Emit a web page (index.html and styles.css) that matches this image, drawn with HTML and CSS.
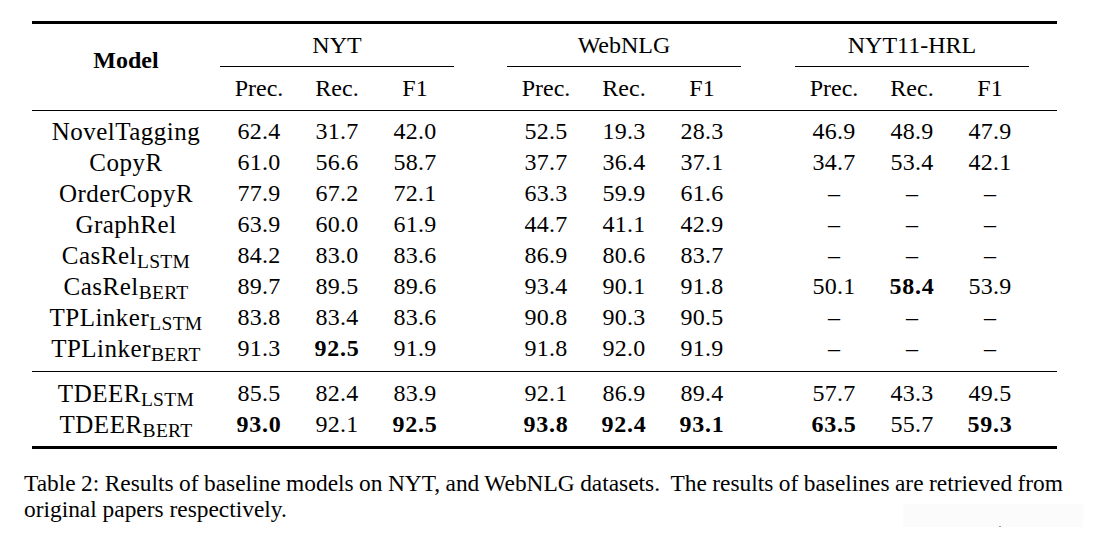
FILE: index.html
```html
<!DOCTYPE html>
<html>
<head>
<meta charset="utf-8">
<link rel="stylesheet" href="styles.css">
</head>
<body>
<div class="page">
  <div class="table">
    <div class="rule-thick"></div>
    <div class="head">
      <div class="model-h">Model</div>
      <div class="gtitle c2">NYT</div>
      <div class="gtitle c4">WebNLG</div>
      <div class="gtitle c6">NYT11-HRL</div>
      <div class="sub-h c2"><span>Prec.</span><span>Rec.</span><span>F1</span></div>
      <div class="sub-h c4"><span>Prec.</span><span>Rec.</span><span>F1</span></div>
      <div class="sub-h c6"><span>Prec.</span><span>Rec.</span><span>F1</span></div>
    </div>
    <div class="rule-thin"></div>
    <div class="body first">
      <div class="row"><div class="name">NovelTagging</div><div class="grp"><span>62.4</span><span>31.7</span><span>42.0</span></div><div class="grp g2"><span>52.5</span><span>19.3</span><span>28.3</span></div><div class="grp g3"><span>46.9</span><span>48.9</span><span>47.9</span></div></div>
      <div class="row"><div class="name">CopyR</div><div class="grp"><span>61.0</span><span>56.6</span><span>58.7</span></div><div class="grp g2"><span>37.7</span><span>36.4</span><span>37.1</span></div><div class="grp g3"><span>34.7</span><span>53.4</span><span>42.1</span></div></div>
      <div class="row"><div class="name">OrderCopyR</div><div class="grp"><span>77.9</span><span>67.2</span><span>72.1</span></div><div class="grp g2"><span>63.3</span><span>59.9</span><span>61.6</span></div><div class="grp g3"><span>–</span><span>–</span><span>–</span></div></div>
      <div class="row"><div class="name">GraphRel</div><div class="grp"><span>63.9</span><span>60.0</span><span>61.9</span></div><div class="grp g2"><span>44.7</span><span>41.1</span><span>42.9</span></div><div class="grp g3"><span>–</span><span>–</span><span>–</span></div></div>
      <div class="row"><div class="name">CasRel<span class="sub">LSTM</span></div><div class="grp"><span>84.2</span><span>83.0</span><span>83.6</span></div><div class="grp g2"><span>86.9</span><span>80.6</span><span>83.7</span></div><div class="grp g3"><span>–</span><span>–</span><span>–</span></div></div>
      <div class="row"><div class="name">CasRel<span class="sub">BERT</span></div><div class="grp"><span>89.7</span><span>89.5</span><span>89.6</span></div><div class="grp g2"><span>93.4</span><span>90.1</span><span>91.8</span></div><div class="grp g3"><span>50.1</span><span class="b">58.4</span><span>53.9</span></div></div>
      <div class="row"><div class="name">TPLinker<span class="sub">LSTM</span></div><div class="grp"><span>83.8</span><span>83.4</span><span>83.6</span></div><div class="grp g2"><span>90.8</span><span>90.3</span><span>90.5</span></div><div class="grp g3"><span>–</span><span>–</span><span>–</span></div></div>
      <div class="row"><div class="name">TPLinker<span class="sub">BERT</span></div><div class="grp"><span>91.3</span><span class="b">92.5</span><span>91.9</span></div><div class="grp g2"><span>91.8</span><span>92.0</span><span>91.9</span></div><div class="grp g3"><span>–</span><span>–</span><span>–</span></div></div>
    </div>
    <div class="rule-thin"></div>
    <div class="body second">
      <div class="row"><div class="name">TDEER<span class="sub">LSTM</span></div><div class="grp"><span>85.5</span><span>82.4</span><span>83.9</span></div><div class="grp g2"><span>92.1</span><span>86.9</span><span>89.4</span></div><div class="grp g3"><span>57.7</span><span>43.3</span><span>49.5</span></div></div>
      <div class="row"><div class="name">TDEER<span class="sub">BERT</span></div><div class="grp"><span class="b">93.0</span><span>92.1</span><span class="b">92.5</span></div><div class="grp g2"><span class="b">93.8</span><span class="b">92.4</span><span class="b">93.1</span></div><div class="grp g3"><span class="b">63.5</span><span>55.7</span><span class="b">59.3</span></div></div>
    </div>
    <div class="rule-thick"></div>
  </div>
  <div class="caption">
    <div class="cap-line1">Table 2: Results of baseline models on NYT, and WebNLG datasets.&nbsp; The results of baselines are retrieved from</div>
    <div class="cap-line2">original papers respectively.</div>
  </div>
  <div class="artifact"><span class="dot"></span></div>
</div>
</body>
</html>
```

FILE: styles.css
```css
html, body {
  margin: 0;
  padding: 0;
  background: #ffffff;
}
body {
  font-family: "Liberation Serif", "Times New Roman", serif;
  color: #000;
}
.page {
  position: relative;
  width: 1093px;
  height: 538px;
  padding-top: 21px;
  box-sizing: border-box;
}
.table {
  margin-left: 32px;
  width: 1025px;
}
.rule-thick {
  height: 3px;
  background: #000;
}
.rule-thin {
  height: 1px;
  background: #000;
}
.head {
  display: grid;
  grid-template-columns: 188px 234px 53px 234px 54px 234px 28px;
  grid-template-rows: 43px 43px;
  font-size: 24px;
}
.model-h {
  grid-column: 1;
  grid-row: 1 / 3;
  font-weight: bold;
  text-align: center;
  line-height: 24px;
  padding-top: 24px;
}
.gtitle {
  grid-row: 1;
  border-bottom: 1px solid #000;
  text-align: center;
  line-height: 42px;
}
.c2 { grid-column: 2; }
.c4 { grid-column: 4; }
.c6 { grid-column: 6; }
.sub-h {
  grid-row: 2;
  display: grid;
  grid-template-columns: repeat(3, 1fr);
  text-align: center;
  line-height: 43px;
}
.body.first {
  padding: 5px 0 7px;
}
.body.second {
  padding: 6px 0 6px;
}
.row {
  display: flex;
  height: 31px;
  font-size: 24px;
  line-height: 31px;
}
.name {
  width: 188px;
  text-align: center;
  white-space: nowrap;
  font-size: 25px;
  letter-spacing: 0.5px;
}
.sub {
  font-size: 19.5px;
  letter-spacing: 0.3px;
  line-height: 0;
  vertical-align: -4px;
}
.grp {
  width: 234px;
  display: grid;
  grid-template-columns: repeat(3, 1fr);
  text-align: center;
  letter-spacing: 0.2px;
}
.g2 { margin-left: 53px; }
.g3 { margin-left: 54px; }
.b {
  font-weight: bold;
  letter-spacing: 0.8px;
}
.caption {
  margin-top: 21px;
  margin-left: 24px;
  width: 1039px;
  font-size: 23.4px;
  line-height: 26px;
}
.cap-line1 {
  white-space: nowrap;
  word-spacing: -1px;
  text-align: justify;
  text-align-last: justify;
}
.cap-line2 {
  text-align: left;
}
.artifact {
  position: absolute;
  left: 903px;
  top: 504px;
  width: 180px;
  height: 23px;
  background: #fbfbfb;
}
.dot {
  position: absolute;
  left: 96px;
  top: 22px;
  width: 2px;
  height: 1px;
  background: #9a9a9a;
}
```
